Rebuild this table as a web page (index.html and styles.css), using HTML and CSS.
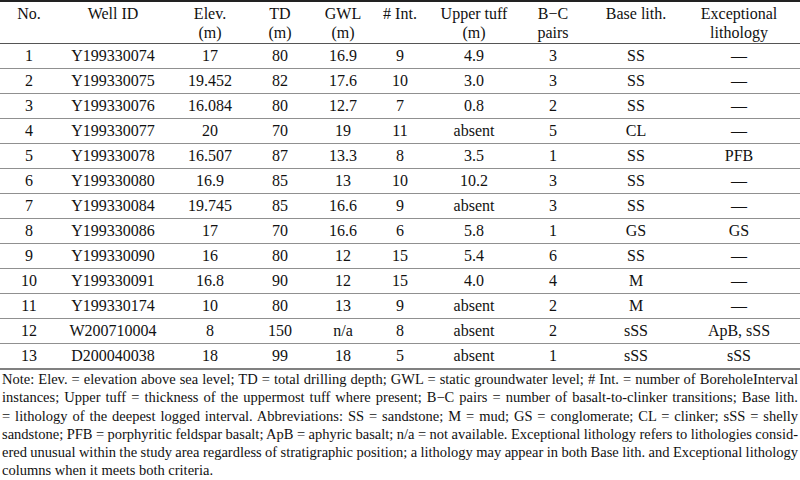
FILE: index.html
```html
<!DOCTYPE html>
<html>
<head>
<meta charset="utf-8">
<link rel="stylesheet" href="styles.css">
</head>
<body class="page">
<table class="wells">
<colgroup>
<col class="c-no"><col class="c-id"><col class="c-elev"><col class="c-td"><col class="c-gwl"><col class="c-int"><col class="c-tuff"><col class="c-bc"><col class="c-base"><col class="c-exc">
</colgroup>
<thead>
<tr><th>No.</th><th>Well ID</th><th>Elev.<br>(m)</th><th>TD<br>(m)</th><th>GWL<br>(m)</th><th># Int.</th><th>Upper tuff<br>(m)</th><th>B−C<br>pairs</th><th>Base lith.</th><th class="exc">Exceptional<br>lithology</th></tr>
</thead>
<tbody>
<tr><td>1</td><td>Y199330074</td><td>17</td><td>80</td><td>16.9</td><td>9</td><td>4.9</td><td>3</td><td>SS</td><td class="exc">—</td></tr>
<tr><td>2</td><td>Y199330075</td><td>19.452</td><td>82</td><td>17.6</td><td>10</td><td>3.0</td><td>3</td><td>SS</td><td class="exc">—</td></tr>
<tr><td>3</td><td>Y199330076</td><td>16.084</td><td>80</td><td>12.7</td><td>7</td><td>0.8</td><td>2</td><td>SS</td><td class="exc">—</td></tr>
<tr><td>4</td><td>Y199330077</td><td>20</td><td>70</td><td>19</td><td>11</td><td>absent</td><td>5</td><td>CL</td><td class="exc">—</td></tr>
<tr><td>5</td><td>Y199330078</td><td>16.507</td><td>87</td><td>13.3</td><td>8</td><td>3.5</td><td>1</td><td>SS</td><td class="exc">PFB</td></tr>
<tr><td>6</td><td>Y199330080</td><td>16.9</td><td>85</td><td>13</td><td>10</td><td>10.2</td><td>3</td><td>SS</td><td class="exc">—</td></tr>
<tr><td>7</td><td>Y199330084</td><td>19.745</td><td>85</td><td>16.6</td><td>9</td><td>absent</td><td>3</td><td>SS</td><td class="exc">—</td></tr>
<tr><td>8</td><td>Y199330086</td><td>17</td><td>70</td><td>16.6</td><td>6</td><td>5.8</td><td>1</td><td>GS</td><td class="exc">GS</td></tr>
<tr><td>9</td><td>Y199330090</td><td>16</td><td>80</td><td>12</td><td>15</td><td>5.4</td><td>6</td><td>SS</td><td class="exc">—</td></tr>
<tr><td>10</td><td>Y199330091</td><td>16.8</td><td>90</td><td>12</td><td>15</td><td>4.0</td><td>4</td><td>M</td><td class="exc">—</td></tr>
<tr><td>11</td><td>Y199330174</td><td>10</td><td>80</td><td>13</td><td>9</td><td>absent</td><td>2</td><td>M</td><td class="exc">—</td></tr>
<tr><td>12</td><td>W200710004</td><td>8</td><td>150</td><td>n/a</td><td>8</td><td>absent</td><td>2</td><td>sSS</td><td class="exc">ApB, sSS</td></tr>
<tr><td>13</td><td>D200040038</td><td>18</td><td>99</td><td>18</td><td>5</td><td>absent</td><td>1</td><td>sSS</td><td class="exc">sSS</td></tr>
</tbody>
</table>
<div class="note">
<span class="line">Note: Elev. = elevation above sea level; TD = total drilling depth; GWL = static groundwater level; # Int. = number of BoreholeInterval</span>
<span class="line">instances; Upper tuff = thickness of the uppermost tuff where present; B−C pairs = number of basalt-to-clinker transitions; Base lith.</span>
<span class="line">= lithology of the deepest logged interval. Abbreviations: SS = sandstone; M = mud; GS = conglomerate; CL = clinker; sSS = shelly</span>
<span class="line">sandstone; PFB = porphyritic feldspar basalt; ApB = aphyric basalt; n/a = not available. Exceptional lithology refers to lithologies consid-</span>
<span class="line">ered unusual within the study area regardless of stratigraphic position; a lithology may appear in both Base lith. and Exceptional lithology</span>
<span class="line last">columns when it meets both criteria.</span>
</div>
</body>
</html>
```

FILE: styles.css
```css
html, body {
  margin: 0;
  padding: 0;
  background: #fff;
}
.page {
  font-family: "Liberation Serif", serif;
  color: #111;
  width: 800px;
  height: 480px;
  overflow: hidden;
}
.wells {
  font-family: "Liberation Serif", serif;
  width: 800px;
  border-collapse: collapse;
  table-layout: fixed;
  font-size: 16px;
  color: #111;
  border-top: 2px solid #222;
  border-bottom: 2px solid #808080;
}
.c-no { width: 58px; }
.c-id { width: 110px; }
.c-elev { width: 84px; }
.c-td { width: 56px; }
.c-gwl { width: 70px; }
.c-int { width: 44px; }
.c-tuff { width: 104px; }
.c-bc { width: 54px; }
.c-base { width: 112px; }
.c-exc { width: 108px; }
.wells th {
  font-weight: normal;
  vertical-align: top;
  text-align: center;
  line-height: 19px;
  padding: 2px 0 1px;
  border-bottom: 1.5px solid #555;
  white-space: nowrap;
}
.wells td {
  text-align: center;
  height: 24px;
  padding: 0;
  line-height: 24px;
  border-bottom: 1.5px solid #909090;
  white-space: nowrap;
}
.wells tbody tr:last-child td {
  border-bottom: 2px solid #808080;
}
.wells .exc {
  padding-right: 14px;
}
.note {
  font-family: "Liberation Serif", serif;
  font-size: 14.5px;
  line-height: 18.3px;
  padding: 0 2px;
  color: #111;
}
.note .line {
  display: block;
  white-space: nowrap;
  word-spacing: -1.2px;
  text-align: justify;
  text-align-last: justify;
}
.note .line.last {
  word-spacing: 0;
  text-align-last: left;
}
```
